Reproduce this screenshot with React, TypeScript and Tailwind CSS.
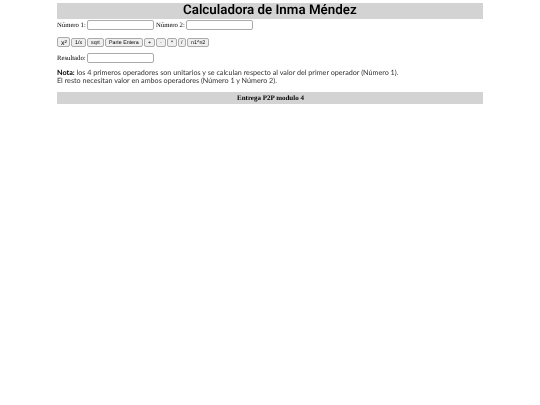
export default function App() {
  const ops = [
    ["x²", 13, "h-[10px] text-[7px]"],
    ["1/x", 15, "h-[9px]"],
    ["sqrt", 17, "h-[9px]"],
    ["Parte Entera", 38, "h-[9px]"],
    ["+", 11, "h-[9px]"],
    ["-", 10, "h-[9px]"],
    ["*", 10, "h-[9px]"],
    ["/", 8, "h-[9px]"],
    ["n1^n2", 22, "h-[9px]"],
  ] as const;
  const input = "w-[67px] h-[10px] bg-white border border-[#aaaaaa] rounded-[2px]";
  const t = "will-change-transform translate-y-[1px]";
  return (
    <div className="w-[540px] h-[405px] bg-white overflow-hidden px-[57px] pt-[3px] font-['Liberation_Serif',serif] text-[6.7px] text-black [text-rendering:geometricPrecision]">
      <div className="h-[16px] bg-[#d3d3d3] text-center font-['Roboto',sans-serif] font-semibold text-[13.35px] leading-[16px]">
        <span className="will-change-transform inline-block">Calculadora de Inma Méndez</span>
      </div>
      <div className="flex items-center h-[10px] mt-[1px] gap-[1px]">
        <span className={t}>Número 1:</span>
        <div className={input} />
        <span className="ml-[1px] will-change-transform translate-y-[1px]">Número 2:</span>
        <div className={input} />
      </div>
      <div className="flex items-end gap-[1px] mt-[7px] h-[10px] font-['Liberation_Sans',Arial,sans-serif] text-[5.3px]">
        {ops.map(([label, w, h]) => (
          <div key={label} style={{ width: w }} className={`${h} flex items-center justify-center bg-[#efefef] border border-[#aaaaaa] rounded-[2px] leading-none`}>
            <span className={t}>{label}</span>
          </div>
        ))}
      </div>
      <div className="flex items-center h-[10px] mt-[6px] gap-[1px]">
        <span className={t}>Resultado:</span>
        <div className={input} />
      </div>
      <div className="mt-[6px] font-['Lato',sans-serif] text-[7.2px] leading-[8px] text-[#333] will-change-transform">
        <p><b className="text-black">Nota:</b> los 4 primeros operadores son unitarios y se calculan respecto al valor del primer operador (Número 1).</p>
        <p>El resto necesitan valor en ambos operadores (Número 1 y Número 2).</p>
      </div>
      <div className="mt-[7px] h-[12px] bg-[#d3d3d3] text-center font-bold text-[7px] leading-[12px]">
        <span className="will-change-transform inline-block">Entrega P2P modulo 4</span>
      </div>
    </div>
  );
}
